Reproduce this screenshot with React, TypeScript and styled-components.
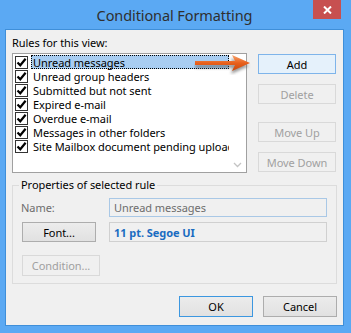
import React from 'react'
import styled, { createGlobalStyle } from 'styled-components'

const GlobalStyle = createGlobalStyle`
  html, body {
    margin: 0;
    padding: 0;
    background: #5ba9f3;
  }
  body {
    font-family: 'Segoe UI', 'Noto Sans', 'Open Sans', sans-serif;
    font-size: 11px;
    letter-spacing: -0.05px;
  }
`

const rules = [
  'Unread messages',
  'Unread group headers',
  'Submitted but not sent',
  'Expired e-mail',
  'Overdue e-mail',
  'Messages in other folders',
  'Site Mailbox document pending upload',
]

const Window = styled.div`
  width: 351px;
  height: 333px;
  box-sizing: border-box;
  background: #5ba9f3;
  display: flex;
  flex-direction: column;
  padding: 0 7px 7px 5px;
`

const TitleBar = styled.div`
  height: 29px;
  flex: none;
  display: grid;
  grid-template-columns: 1fr auto 1fr;
  align-items: center;
`

const Title = styled.div`
  grid-column: 2;
  font-size: 14.5px;
  color: #2f2f2f;
  padding-top: 1px;
  letter-spacing: -0.1px;
`

const CloseButton = styled.div`
  grid-column: 3;
  justify-self: end;
  align-self: start;
  margin-right: 3px;
  width: 28px;
  height: 19px;
  background: #c75050;
  display: flex;
  align-items: center;
  justify-content: center;
`

const Panel = styled.div`
  flex: 1;
  background: #f0f0f0;
  border: 1px solid #3f8fd9;
  display: flex;
  flex-direction: column;
  padding: 5px 0 0 6px;
  color: #000;
`

const SectionLabel = styled.div`
  line-height: 16px;
  margin-bottom: 2px;
`

const TopRow = styled.div`
  position: relative;
  display: flex;
  gap: 11px;
`

const ListBox = styled.div`
  width: 235px;
  height: 120px;
  box-sizing: border-box;
  background: #fff;
  border: 1px solid #a0a0a0;
  display: flex;
`

const Items = styled.div`
  width: 216px;
  padding-top: 1px;
  overflow: hidden;
`

const Item = styled.div`
  height: 14px;
  display: flex;
  align-items: center;
`

const CheckBox = styled.span`
  width: 13px;
  height: 13px;
  flex: none;
  box-sizing: border-box;
  border: 1px solid #333;
  background: #fff;
  margin: 0 3px 0 2px;
  display: flex;
  align-items: center;
  justify-content: center;
`

const ItemText = styled.span<{ $selected?: boolean }>`
  flex: 1;
  height: 14px;
  box-sizing: border-box;
  display: flex;
  align-items: center;
  white-space: nowrap;
  padding-left: 1px;
  border: 1px dotted ${(p) => (p.$selected ? '#000' : 'transparent')};
  background: ${(p) => (p.$selected ? '#a8cdf1' : 'transparent')};
`

const ScrollTrack = styled.div`
  width: 17px;
  display: flex;
  flex-direction: column;
  justify-content: flex-end;
  align-items: center;
  padding-bottom: 4px;
`

const ButtonColumn = styled.div`
  display: flex;
  flex-direction: column;
  padding-top: 1px;
`

const Btn = styled.div<{ $w?: number; $h?: number; $variant?: 'hot' | 'default' | 'normal' | 'disabled'; $mt?: number }>`
  width: ${(p) => p.$w ?? 78}px;
  height: ${(p) => p.$h ?? 20}px;
  margin-top: ${(p) => p.$mt ?? 0}px;
  box-sizing: border-box;
  display: flex;
  align-items: center;
  justify-content: center;
  flex: none;
  border: 1px solid
    ${(p) =>
      p.$variant === 'hot'
        ? '#7eb4ea'
        : p.$variant === 'default'
        ? '#3c97e0'
        : p.$variant === 'disabled'
        ? '#d9d9d9'
        : '#adadad'};
  background: ${(p) =>
    p.$variant === 'hot'
      ? '#e5f1fb'
      : p.$variant === 'disabled'
      ? '#f0f0f0'
      : 'linear-gradient(#ececec, #e1e1e1)'};
  color: ${(p) => (p.$variant === 'disabled' ? '#a0a0a0' : '#000')};
`

const Arrow = styled.svg`
  position: absolute;
  left: 182px;
  top: 0;
`

const GroupBox = styled.fieldset`
  margin: 4px 0 0 0;
  width: 325px;
  box-sizing: border-box;
  border: 1px solid #dcdcdc;
  padding: 0 9px 7px 8px;
  min-width: 0;
`

const Legend = styled.legend`
  padding: 0 2px;
  margin-left: -2px;
  line-height: 16px;
`

const PropGrid = styled.div`
  display: grid;
  grid-template-columns: 88px 1fr;
  row-gap: 5px;
  align-items: center;
  margin-top: 5px;
`

const FieldLabel = styled.div`
  color: #6d6d6d;
`

const Field = styled.div<{ $tone: 'name' | 'font' }>`
  height: ${(p) => (p.$tone === 'name' ? 19 : 20)}px;
  box-sizing: border-box;
  border: 1px solid ${(p) => (p.$tone === 'name' ? '#a9c8e6' : '#d0d0d0')};
  background: #f0f0f0;
  display: flex;
  align-items: center;
  padding-left: 4px;
  color: ${(p) => (p.$tone === 'name' ? '#6d6d6d' : '#1a6cc1')};
  font-weight: ${(p) => (p.$tone === 'name' ? 400 : 700)};
`

const FontCell = styled.div`
  padding-left: 1px;
`

const ConditionRow = styled.div`
  margin-top: 13px;
  padding-left: 1px;
`

const Footer = styled.div`
  display: flex;
  gap: 10px;
  margin: 12px 0 0 167px;
`

const Check = () => (
  <svg width="11" height="11" viewBox="0 0 11 11">
    <path d="M1.5 5.4 L4.3 8.3 L9.6 1.8" fill="none" stroke="#000" strokeWidth="2.2" />
  </svg>
)

const App: React.FC = () => {
  return (
    <>
      <GlobalStyle />
      <Window>
        <TitleBar>
          <Title>Conditional Formatting</Title>
          <CloseButton>
            <svg width="9" height="8" viewBox="0 0 9 8">
              <path d="M1 0.5 L8 7.5 M8 0.5 L1 7.5" stroke="#fff" strokeWidth="2" />
            </svg>
          </CloseButton>
        </TitleBar>
        <Panel>
          <SectionLabel>Rules for this view:</SectionLabel>
          <TopRow>
            <ListBox>
              <Items>
                {rules.map((r, i) => (
                  <Item key={r}>
                    <CheckBox>
                      <Check />
                    </CheckBox>
                    <ItemText $selected={i === 0}>{r}</ItemText>
                  </Item>
                ))}
              </Items>
              <ScrollTrack>
                <svg width="9" height="6" viewBox="0 0 9 6">
                  <path d="M1 1 L4.5 4.5 L8 1" fill="none" stroke="#c4c4c4" strokeWidth="1.3" />
                </svg>
              </ScrollTrack>
            </ListBox>
            <ButtonColumn>
              <Btn $variant="hot">Add</Btn>
              <Btn $variant="disabled" $mt={10}>Delete</Btn>
              <Btn $variant="disabled" $mt={18}>Move Up</Btn>
              <Btn $variant="disabled" $mt={10}>Move Down</Btn>
            </ButtonColumn>
            <Arrow width="60" height="22" viewBox="0 0 60 22">
              <defs>
                <linearGradient id="shaft" x1="0" y1="0" x2="0" y2="1">
                  <stop offset="0" stopColor="#f7a56e" />
                  <stop offset="0.5" stopColor="#e8601c" />
                  <stop offset="1" stopColor="#c9480c" />
                </linearGradient>
                <filter id="blur" x="-20%" y="-50%" width="140%" height="200%">
                  <feGaussianBlur stdDeviation="1.4" />
                </filter>
              </defs>
              <path
                d="M2 10 L40 9 L38 3 L56 11 L38 19 L40 13 L2 13 Z"
                fill="#555"
                opacity="0.6"
                filter="url(#blur)"
                transform="translate(-1 2)"
              />
              <path d="M1 8 L41 8 L38 2 L56 10 L38 18 L41 12 L1 12 Z" fill="url(#shaft)" />
            </Arrow>
          </TopRow>
          <GroupBox>
            <Legend>Properties of selected rule</Legend>
            <PropGrid>
              <FieldLabel>Name:</FieldLabel>
              <Field $tone="name">Unread messages</Field>
              <FontCell>
                <Btn $w={74} $variant="normal">Font...</Btn>
              </FontCell>
              <Field $tone="font">11 pt. Segoe UI</Field>
            </PropGrid>
            <ConditionRow>
              <Btn $w={78} $h={21} $variant="disabled">Condition...</Btn>
            </ConditionRow>
          </GroupBox>
          <Footer>
            <Btn $w={74} $h={21} $variant="default">OK</Btn>
            <Btn $w={74} $h={21} $variant="normal">Cancel</Btn>
          </Footer>
        </Panel>
      </Window>
    </>
  )
}

export default App
